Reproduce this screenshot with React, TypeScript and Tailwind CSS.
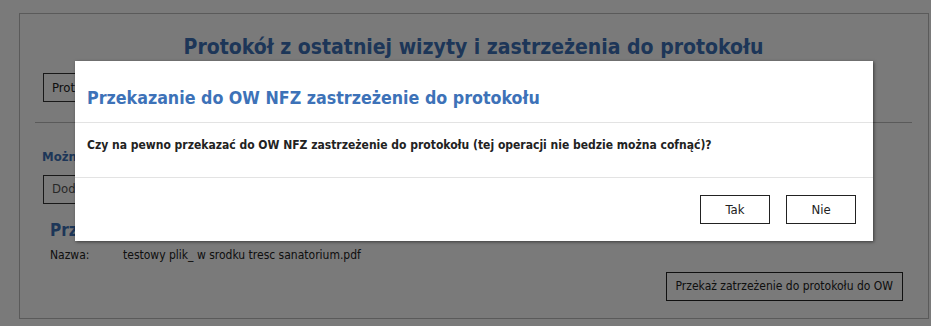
import React from "react";

const FONT = { fontFamily: '"DejaVu Sans Condensed", "DejaVu Sans", sans-serif' };

function Page() {
  return (
    <div className="h-[326px] bg-white pl-[19px] pr-[2px] pt-[13px] pb-[7px]">
      <div className="h-full border border-[#bdbdbd] pl-[15px] pr-[16px]">
        <h1 className="mt-[20px] text-center text-[21px] font-bold leading-[27px] text-[#3d72b8]">
          Protokół z ostatniej wizyty i zastrzeżenia do protokołu
        </h1>
        <div className="mt-[12px] pb-[20px] pl-[8px]">
          <button className="h-[29px] border border-[#333] px-[8px] text-[13px] text-[#222]">
            Protokół z ostatniej wizyty
          </button>
        </div>
        <div className="border-t border-[#bdbdbd]" />
        <div className="pl-[7px] pt-[24px] text-[13px] font-bold text-[#3d72b8]">
          Można dodać zastrzeżenie do protokołu
        </div>
        <div className="mt-[8px] pl-[8px]">
          <button className="h-[29px] border border-[#333] px-[8px] text-left text-[13px] text-[#555]">
            Dodaj plik
          </button>
        </div>
        <div className="mt-[16px] pl-[15px] text-[17px] font-bold leading-[20px] text-[#3d72b8]">
          Przekazane zastrzeżenie
        </div>
        <div className="mt-[6px] flex pl-[15px] text-[12px] text-[#222]">
          <span className="w-[73px]">Nazwa:</span>
          <span>testowy plik_ w srodku tresc sanatorium.pdf</span>
        </div>
        <div className="mt-[8px] flex justify-end pr-[9px]">
          <button className="h-[29px] border border-[#222] px-[9px] text-[12px] text-[#222]">
            Przekaż zatrzeżenie do protokołu do OW
          </button>
        </div>
      </div>
    </div>
  );
}

export default function App() {
  return (
    <div className="relative h-[326px] w-[931px] overflow-hidden" style={FONT}>
      <Page />
      <div className="absolute inset-0 bg-black/[0.52]" />
      <div className="absolute left-[75px] top-[61px] w-[798px] bg-white shadow-[1px_1px_3px_rgba(0,0,0,0.5)]">
        <div className="h-[61px] px-[12px] pt-[25px] text-[17.7px] font-bold leading-[24px] text-[#3d72b8]">
          Przekazanie do OW NFZ zastrzeżenie do protokołu
        </div>
        <div className="h-[55px] border-t border-[#e3e3e3] px-[12px] pt-[13px] text-[12px] font-bold leading-[18px] text-[#222]">
          Czy na pewno przekazać do OW NFZ zastrzeżenie do protokołu (tej operacji nie bedzie można cofnąć)?
        </div>
        <div className="flex h-[64px] justify-end gap-[16px] border-t border-[#e3e3e3] pr-[17px] pt-[17px]">
          <button className="h-[29px] w-[70px] border border-[#222] text-[13px] text-[#222]">Tak</button>
          <button className="h-[29px] w-[70px] border border-[#222] text-[13px] text-[#222]">Nie</button>
        </div>
      </div>
    </div>
  );
}
